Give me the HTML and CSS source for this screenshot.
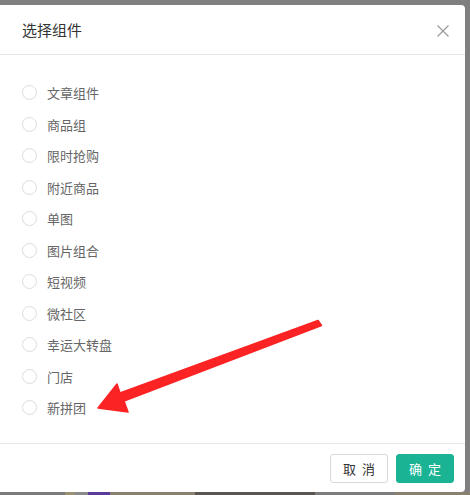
FILE: index.html
```html
<!DOCTYPE html>
<html lang="zh">
<head>
<meta charset="utf-8">
<link rel="stylesheet" href="styles.css">
</head>
<body>
<div class="modal">
  <div class="modal-header">
    <span class="modal-title">选择组件</span>
    <svg class="close" width="12" height="12" viewBox="0 0 12 12"><path d="M0.5 0.5 L11.5 11.5 M11.5 0.5 L0.5 11.5" stroke="#999" stroke-width="1.2" fill="none"/></svg>
  </div>
  <div class="modal-body">
    <label class="radio"><span class="dot"></span><span>文章组件</span></label>
    <label class="radio"><span class="dot"></span><span>商品组</span></label>
    <label class="radio"><span class="dot"></span><span>限时抢购</span></label>
    <label class="radio"><span class="dot"></span><span>附近商品</span></label>
    <label class="radio"><span class="dot"></span><span>单图</span></label>
    <label class="radio"><span class="dot"></span><span>图片组合</span></label>
    <label class="radio"><span class="dot"></span><span>短视频</span></label>
    <label class="radio"><span class="dot"></span><span>微社区</span></label>
    <label class="radio"><span class="dot"></span><span>幸运大转盘</span></label>
    <label class="radio"><span class="dot"></span><span>门店</span></label>
    <label class="radio"><span class="dot"></span><span>新拼团</span></label>
  </div>
  <div class="modal-footer">
    <button class="btn btn-default">取 消</button>
    <button class="btn btn-primary">确 定</button>
  </div>
  <svg class="arrow" width="470" height="495" viewBox="0 0 470 495">
    <path d="M318 320.5 L321.5 325.5 L124 401 L128 412 L98 408 L117 384 L120 393 Z" fill="#fb2323" stroke="#fb2323" stroke-width="1.5" stroke-linejoin="round"/>
  </svg>
</div>
<div class="under">
  <span class="seg s1"></span><span class="seg s2"></span><span class="seg s3"></span><span class="seg s4"></span><span class="seg s5"></span><span class="seg s6"></span><span class="seg s7"></span><span class="seg s8"></span>
</div>
</body>
</html>
```
FILE: styles.css
```css
html, body {
  margin: 0;
  padding: 0;
}
body {
  width: 470px;
  height: 495px;
  overflow: hidden;
  background: #7f7f7f;
  padding-top: 5px;
  box-sizing: border-box;
  font-family: "Noto Sans CJK SC", "Liberation Sans", sans-serif;
  display: flex;
  flex-direction: column;
}
.modal {
  position: relative;
  width: 465px;
  height: 487px;
  background: #fff;
  border-radius: 0 4px 4px 0;
  display: flex;
  flex-direction: column;
  flex: none;
}
.modal-header {
  height: 49px;
  border-bottom: 1px solid #e8e8e8;
  display: flex;
  align-items: center;
  justify-content: space-between;
  padding: 0 16px 0 22px;
  flex: none;
}
.modal-title {
  font-size: 15px;
  color: #333;
}
.close {
  display: block;
  margin-top: 2px;
}
.modal-body {
  flex: 1;
  padding: 22px 22px 0;
  display: flex;
  flex-direction: column;
}
.radio {
  height: 31.5px;
  display: flex;
  align-items: center;
  font-size: 13px;
  color: #666;
}
.dot {
  width: 13px;
  height: 13px;
  border: 1px solid #dcdcdc;
  border-radius: 50%;
  margin-right: 10px;
  flex: none;
}
.modal-footer {
  border-top: 1px solid #e8e8e8;
  display: flex;
  justify-content: flex-end;
  align-items: flex-start;
  padding: 10px 11px 0 0;
  gap: 8px;
  flex: none;
  box-sizing: border-box;
  height: 49px;
}
.btn {
  height: 29px;
  width: 58px;
  border-radius: 3px;
  font-family: "Noto Sans CJK SC", "Liberation Sans", sans-serif;
  font-size: 13px;
  letter-spacing: 1.5px;
  padding: 0 0 0 1.5px;
  cursor: pointer;
}
.btn-default {
  background: #fff;
  border: 1px solid #d9d9d9;
  color: #333;
}
.btn-primary {
  background: #1ab394;
  border: 1px solid #1ab394;
  color: #fff;
}
.arrow {
  position: absolute;
  left: 0;
  top: -5px;
  pointer-events: none;
}
.under {
  flex: 1;
  display: flex;
}
.seg { height: 100%; display: block; }
.s1 { width: 65px; background: #7a7a7a; }
.s2 { width: 10px; background: #9c9074; }
.s3 { width: 13px; background: #8a8a8a; }
.s4 { width: 22px; background: #5b3a9a; }
.s5 { width: 85px; background: #8a8070; }
.s6 { width: 120px; background: #5a5550; }
.s7 { width: 80px; background: #7c7c7c; }
.s8 { flex: 1; background: #8a8070; }
```
